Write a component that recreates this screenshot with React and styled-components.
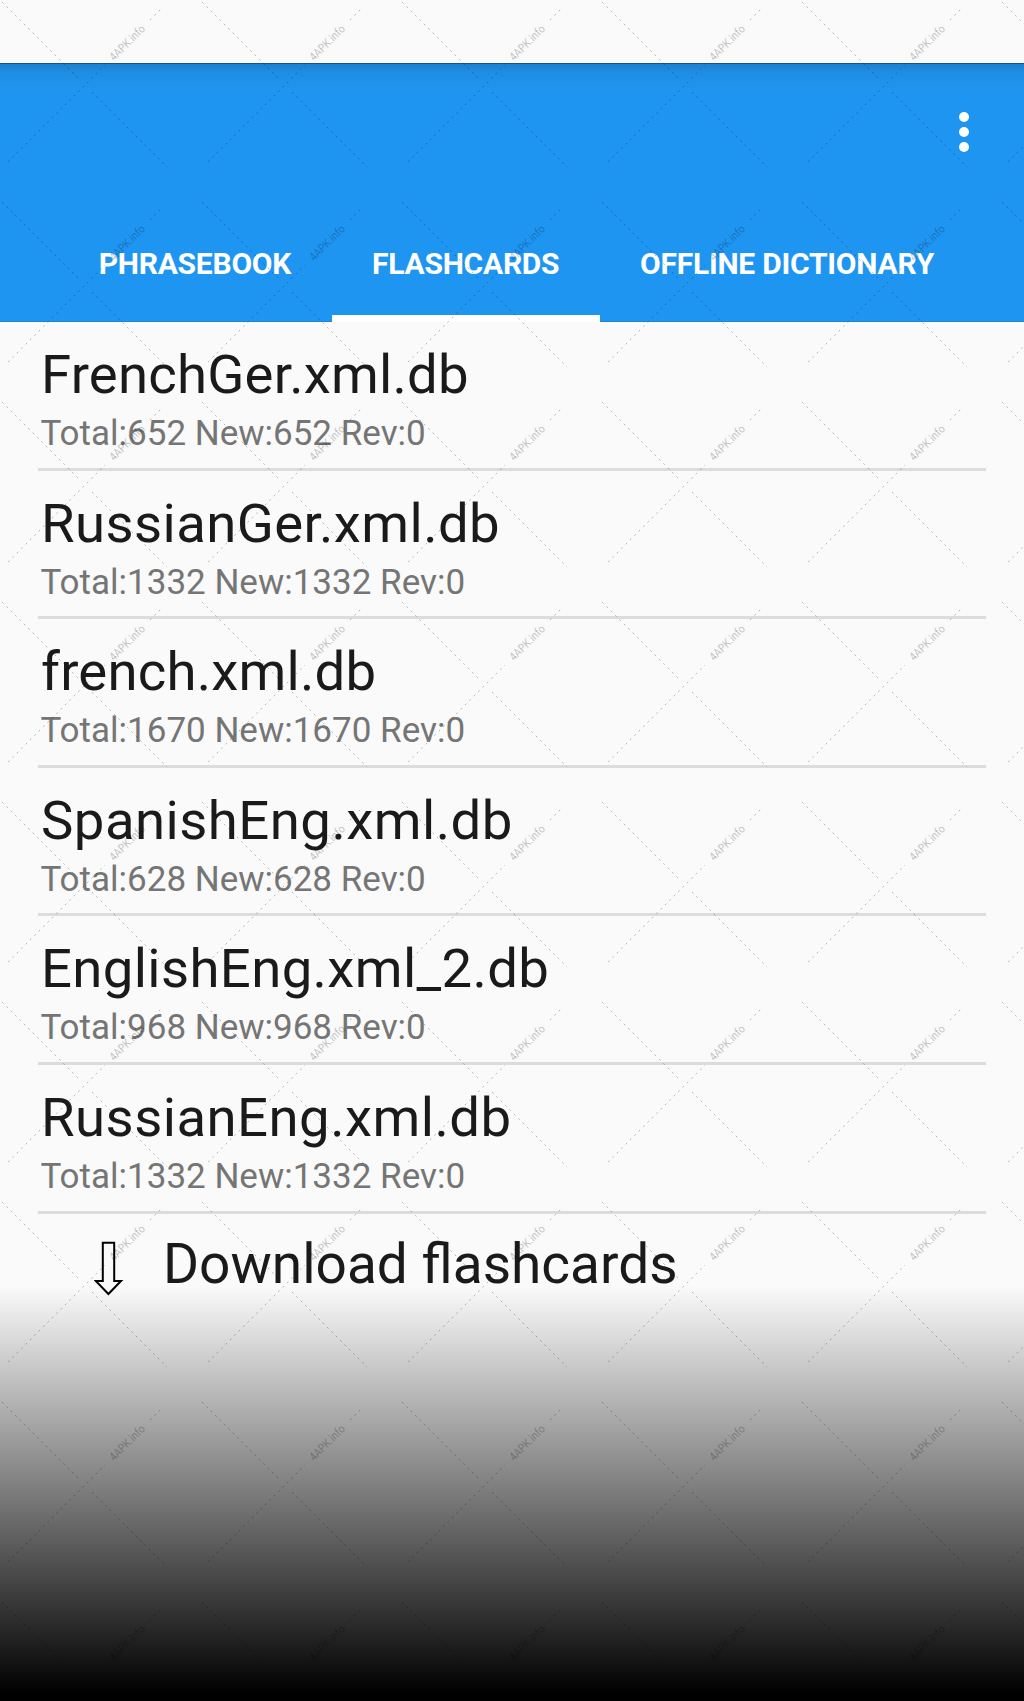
import React from "react";
import styled, { createGlobalStyle } from "styled-components";

const GlobalStyle = createGlobalStyle`
  *, *::before, *::after { box-sizing: border-box; }
  body { margin: 0; background: #fafafa; font-family: Roboto, "Liberation Sans", sans-serif; }
`;

const Screen = styled.main`
  position: relative;
  display: flex;
  flex-direction: column;
  width: 1024px;
  height: 1701px;
  overflow: hidden;
  background: #fafafa;
`;

const StatusBar = styled.div`
  flex: none;
  height: 63px;
`;

const Header = styled.header`
  flex: none;
  display: flex;
  flex-direction: column;
  height: 259px;
  border-top: 1px solid #17527f;
  border-bottom: 1px solid #1d86cf;
  background: linear-gradient(#1b80cf 0, #1f8ce0 7px, #1f92ea 18px, #1f95f2 26px);
`;

const Toolbar = styled.div`
  display: flex;
  justify-content: flex-end;
  align-items: center;
  height: 136px;
  padding-right: 54.6px;
`;

const MenuButton = styled.button`
  display: flex;
  flex-direction: column;
  gap: 4.6px;
  padding: 0;
  border: 0;
  background: none;
`;

const Dot = styled.span`
  width: 10.4px;
  height: 10.4px;
  border-radius: 50%;
  background: #fff;
`;

const Tabs = styled.nav`
  display: flex;
  flex: 1;
  padding-left: 60px;
`;

const Tab = styled.button`
  flex: none;
  width: ${(p) => p.$width}px;
  padding: 12px 0 0 ${(p) => p.$inset}px;
  border: 0;
  border-bottom: 7px solid ${(p) => (p.$active ? "#fff" : "transparent")};
  margin-bottom: -1px;
  background: none;
  color: #fff;
  font: 700 30px/36px Roboto, "Liberation Sans", sans-serif;
  letter-spacing: -0.24px;
  text-align: left;
  white-space: nowrap;
`;

const List = styled.ul`
  flex: none;
  margin: 0;
  padding: 0 38px;
  list-style: none;
`;

const Row = styled.li`
  height: 148.6px;
  padding: 20px 0 0 3px;
  border-bottom: 3px solid #dcdcdc;
`;

const Title = styled.div`
  color: #1a1a1a;
  font-size: ${(p) => p.$size || 54.5}px;
  line-height: 64px;
  letter-spacing: ${(p) => p.$spacing || 0}px;
  white-space: nowrap;
`;

const Counts = styled.div`
  margin: 7px 0 0 -0.6px;
  color: #757575;
  font-size: 35px;
  line-height: 42px;
  white-space: nowrap;
`;

const Download = styled.div`
  position: relative;
  display: flex;
  flex: none;
  align-items: flex-start;
  height: 72px;
  padding: 18px 0 0 94px;
`;

const ArrowIcon = styled.svg`
  flex: none;
  width: 30px;
  height: 56px;
  margin: 8px 39px 0 0;
`;

const Fade = styled.div`
  flex: 1;
  background: linear-gradient(#fafafa 0, #000 408px);
`;

const Watermark = styled.svg`
  position: absolute;
  inset: 0;
  width: 1024px;
  height: 1701px;
  pointer-events: none;
`;

const decks = [
  ["FrenchGer.xml.db", "Total:652 New:652 Rev:0", 0.22],
  ["RussianGer.xml.db", "Total:1332 New:1332 Rev:0", 0.4],
  ["french.xml.db", "Total:1670 New:1670 Rev:0", 0.2],
  ["SpanishEng.xml.db", "Total:628 New:628 Rev:0", 0.46],
  ["EnglishEng.xml_2.db", "Total:968 New:968 Rev:0", 0.36],
  ["RussianEng.xml.db", "Total:1332 New:1332 Rev:0", 0.46],
];

const tiles = Array.from({ length: 54 }, (_, i) => [(i % 6) * 200, Math.floor(i / 6) * 200]);

function Tile({ x, y }) {
  return (
    <g transform={`translate(${x} ${y})`}>
      <path
        d="M2 2 81 81M92 92 167 167M8 162 105 65M150 20 161 9"
        fill="none"
        stroke="#000"
        strokeOpacity="0.27"
        strokeWidth="1"
        strokeDasharray="2 4.2"
      />
      {x < 1000 && (
        <text
          transform="translate(114 61.5) rotate(-45)"
          fontFamily="Roboto, sans-serif"
          fontSize="11.6"
          fill="#000"
          fillOpacity="0.25"
          textLength="45"
          lengthAdjust="spacingAndGlyphs"
        >
          4APK.info
        </text>
      )}
    </g>
  );
}

export default function App() {
  return (
    <Screen>
      <GlobalStyle />
      <StatusBar />
      <Header>
        <Toolbar>
          <MenuButton aria-label="More options">
            <Dot />
            <Dot />
            <Dot />
          </MenuButton>
        </Toolbar>
        <Tabs>
          <Tab $width={272} $inset={38.7}>PHRASEBOOK</Tab>
          <Tab $width={268} $inset={40} $active>FLASHCARDS</Tab>
          <Tab $width={373} $inset={40}>OFFLINE DICTIONARY</Tab>
        </Tabs>
      </Header>
      <List>
        {decks.map(([name, counts, spacing]) => (
          <Row key={name}>
            <Title $spacing={spacing}>{name}</Title>
            <Counts>{counts}</Counts>
          </Row>
        ))}
      </List>
      <Download>
        <ArrowIcon viewBox="0 0 30 56" fill="none" stroke="#000" strokeWidth="2">
          <path d="M8.8 2.8H20.2V41H27L14.4 54 1.8 41H8.8Z" />
        </ArrowIcon>
        <Title $size={55}>Download flashcards</Title>
      </Download>
      <Fade />
      <Watermark aria-hidden="true">
        {tiles.map(([x, y]) => (
          <Tile key={`${x}-${y}`} x={x} y={y} />
        ))}
      </Watermark>
    </Screen>
  );
}
